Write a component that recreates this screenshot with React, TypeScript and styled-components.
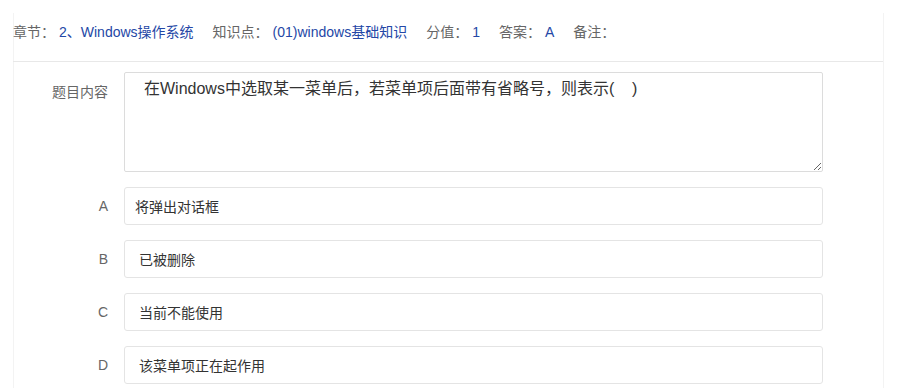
import React from "react";
import styled, { createGlobalStyle } from "styled-components";

const GlobalStyle = createGlobalStyle`
  html, body {
    margin: 0;
    padding: 0;
    background: #fff;
    font-family: "Liberation Sans", "Noto Sans CJK SC", sans-serif;
  }
`;

const metaItems = [
  { label: "章节：", value: "2、Windows操作系统" },
  { label: "知识点：", value: "(01)windows基础知识" },
  { label: "分值：", value: "1" },
  { label: "答案：", value: "A" },
  { label: "备注：", value: "" },
];

const options = [
  { key: "A", text: "将弹出对话框" },
  { key: "B", text: " 已被删除" },
  { key: "C", text: " 当前不能使用" },
  { key: "D", text: " 该菜单项正在起作用" },
];

const App = () => {
  return (
    <>
      <GlobalStyle />
      <Panel>
        <MetaBar>
          {metaItems.map((item) => (
            <MetaItem key={item.label}>
              <MetaLabel>{item.label}</MetaLabel>
              {item.value && <MetaValue>{item.value}</MetaValue>}
            </MetaItem>
          ))}
        </MetaBar>
        <QuestionForm>
          <FieldLabel isTop>题目内容</FieldLabel>
          <ContentArea
            readOnly
            defaultValue="在Windows中选取某一菜单后，若菜单项后面带有省略号，则表示(    )"
          />
          {options.map((opt) => (
            <React.Fragment key={opt.key}>
              <FieldLabel>{opt.key}</FieldLabel>
              <OptionBox>{opt.text}</OptionBox>
            </React.Fragment>
          ))}
        </QuestionForm>
      </Panel>
    </>
  );
};

export default App;

const Panel = styled.div`
  margin: 13px 0 0 13px;
  width: 869px;
  min-height: 375px;
  border-left: 1px solid #f3f3f3;
  border-right: 1px solid #f3f3f3;
`;

const MetaBar = styled.div`
  display: flex;
  align-items: center;
  gap: 19px;
  padding: 9px 0 19px 0;
  border-bottom: 1px solid #e8e8e8;
  margin-left: -1px;
  font-size: 14px;
  line-height: 20px;
`;

const MetaItem = styled.div`
  display: flex;
  gap: 4px;
`;

const MetaLabel = styled.span`
  color: #666;
`;

const MetaValue = styled.span`
  color: #2447a6;
`;

const QuestionForm = styled.div`
  display: grid;
  grid-template-columns: 94px 1fr;
  column-gap: 16px;
  row-gap: 15px;
  padding: 10px 60px 0 0;
`;

const FieldLabel = styled.div<{ isTop?: boolean }>`
  text-align: right;
  color: #666;
  font-size: 14px;
  line-height: 20px;
  padding-top: ${(p) => (p.isTop ? "10px" : "0")};
  align-self: ${(p) => (p.isTop ? "start" : "center")};
`;

const ContentArea = styled.textarea`
  display: block;
  box-sizing: border-box;
  width: 100%;
  height: 100px;
  margin: 0;
  padding: 4px 19px;
  border: 1px solid #dcdcdc;
  border-radius: 2px;
  font-family: "Liberation Sans", "Noto Sans CJK SC", sans-serif;
  font-size: 16px;
  line-height: 24px;
  color: #333;
  outline: none;
`;

const OptionBox = styled.div`
  box-sizing: border-box;
  height: 38px;
  display: flex;
  align-items: center;
  padding: 0 10px;
  border: 1px solid #e4e4e4;
  border-radius: 3px;
  font-size: 14px;
  color: #333;
  white-space: pre;
`;
